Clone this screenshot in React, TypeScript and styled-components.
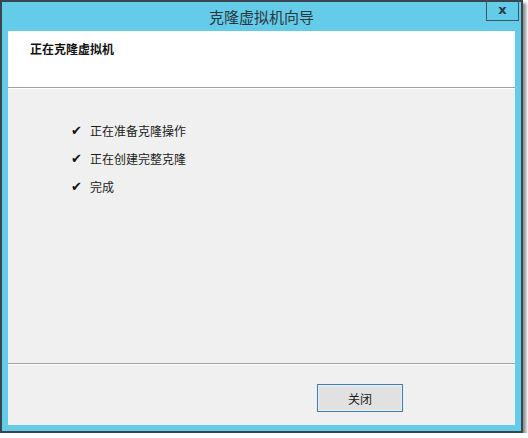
import React from 'react';
import styled, { createGlobalStyle } from 'styled-components';

const GlobalStyle = createGlobalStyle`
  html, body {
    margin: 0;
    padding: 0;
    background: #ffffff;
  }
  body {
    font-family: "Noto Sans CJK SC", "Noto Sans", sans-serif;
  }
`;

const Window = styled.div`
  position: relative;
  box-sizing: border-box;
  width: 523px;
  height: 433px;
  border: 2px solid #37464f;
  background: #64cbe9;
  padding: 0 6px 6px 6px;
  display: flex;
  flex-direction: column;
  box-shadow: 3px 3px 3px rgba(0, 0, 0, 0.45);
`;

const TitleBar = styled.div`
  height: 29px;
  display: flex;
  align-items: center;
  justify-content: center;
  font-size: 15px;
  color: #2b3740;
  padding-bottom: 1px;
  box-sizing: border-box;
`;

const CloseButton = styled.div`
  position: absolute;
  top: -2px;
  right: 2px;
  width: 33px;
  height: 21px;
  box-sizing: border-box;
  border: 1px solid #3f5560;
  border-top: none;
  display: flex;
  align-items: center;
  justify-content: center;
  font-family: "DejaVu Sans", sans-serif;
  font-weight: bold;
  font-size: 13px;
  color: #2b3a44;
  padding-bottom: 2px;
`;

const Client = styled.div`
  flex: 1;
  display: flex;
  flex-direction: column;
  background: #f0f0f0;
`;

const Header = styled.div`
  height: 57px;
  box-sizing: border-box;
  background: #ffffff;
  border-bottom: 1px solid #a0a0a0;
  padding: 10px 0 0 22px;
  font-size: 12px;
  font-weight: bold;
  color: #111111;
  line-height: 16px;
`;

const Steps = styled.div`
  flex: 1;
  display: flex;
  flex-direction: column;
  padding: 27px 0 0 63px;
  border-top: 1px solid #ffffff;
  border-bottom: 1px solid #a0a0a0;
`;

const Step = styled.div`
  height: 28px;
  display: flex;
  align-items: center;
  font-size: 12px;
  color: #1a1a1a;
`;

const Check = styled.span`
  width: 19px;
  font-family: "DejaVu Sans", sans-serif;
  font-size: 13px;
  color: #111111;
`;

const Footer = styled.div`
  height: 61px;
  box-sizing: border-box;
  display: flex;
  justify-content: flex-end;
  padding: 19px 112px 0 0;
  border-top: 1px solid #ffffff;
`;

const Button = styled.button`
  width: 86px;
  height: 28px;
  box-sizing: border-box;
  border: 1px solid #3c7fb1;
  background: #e1e1e1;
  font-family: "Noto Sans CJK SC", sans-serif;
  font-size: 12px;
  color: #1a1a1a;
  padding: 0;
  box-shadow: inset 0 0 0 1px #e9eef2;
`;

const steps = ['正在准备克隆操作', '正在创建完整克隆', '完成'];

export default function App() {
  return (
    <>
      <GlobalStyle />
      <Window>
        <TitleBar>克隆虚拟机向导</TitleBar>
        <CloseButton>x</CloseButton>
        <Client>
          <Header>正在克隆虚拟机</Header>
          <Steps>
            {steps.map((s) => (
              <Step key={s}>
                <Check>✔</Check>
                {s}
              </Step>
            ))}
          </Steps>
          <Footer>
            <Button>关闭</Button>
          </Footer>
        </Client>
      </Window>
    </>
  );
}
